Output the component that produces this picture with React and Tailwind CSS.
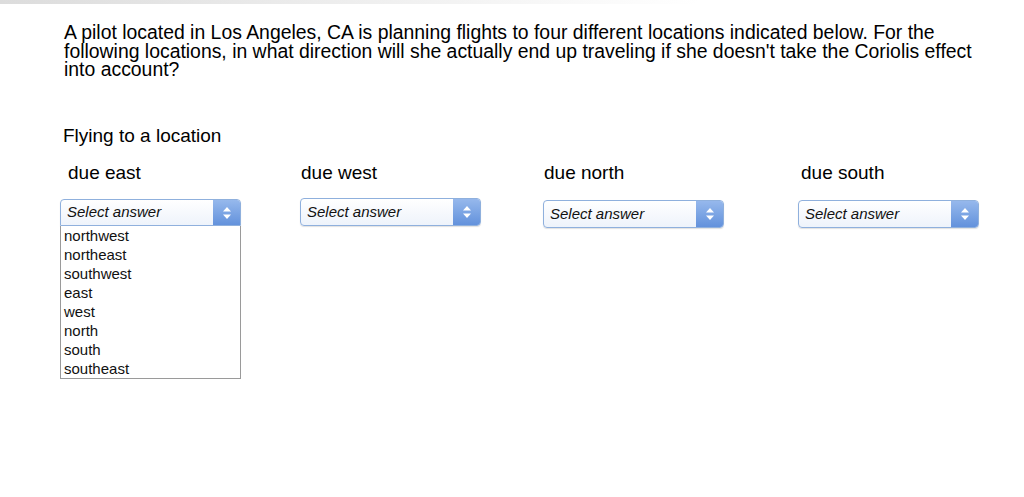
import { useState } from 'react';

const options = ['northwest', 'northeast', 'southwest', 'east', 'west', 'north', 'south', 'southeast'];

const columns = [
  { label: 'due east', w: 'w-[240px]', labelPad: 'pl-[8px]', boxMt: 'mt-[15px]', open: true },
  { label: 'due west', w: 'w-[243px]', labelPad: 'pl-[1px]', boxMt: 'mt-[14px]' },
  { label: 'due north', w: 'w-[255px]', labelPad: 'pl-[1px]', boxMt: 'mt-[16px]' },
  { label: 'due south', w: 'w-[200px]', labelPad: 'pl-[3px]', boxMt: 'mt-[16px]' },
];

function Arrows() {
  return (
    <svg width="10" height="14" viewBox="0 0 10 14">
      <path d="M5 1 L9 5.5 L1 5.5 Z" fill="#fff" />
      <path d="M5 13 L9 8.5 L1 8.5 Z" fill="#fff" />
    </svg>
  );
}

function SelectBox({ open }) {
  return (
    <div className="w-[181px]">
      <div
        className={`flex border border-[#8fb0dd] bg-gradient-to-b from-white to-[#eef3fb] shadow-[0_1px_1px_rgba(0,0,0,0.12)] ${
          open ? 'h-[27px] rounded-t-[4px]' : 'h-[28px] rounded-[4px]'
        }`}
      >
        <div className="flex-1 flex items-center pl-[6px] text-[15px] italic text-[#111]">Select answer</div>
        <div
          className={`w-[27px] flex items-center justify-center bg-gradient-to-b from-[#96b8ec] to-[#6392dc] ${
            open ? 'rounded-tr-[3px]' : 'rounded-r-[3px]'
          }`}
        >
          <Arrows />
        </div>
      </div>
      {open && (
        <div className="border border-t-0 border-[#9a9a9a] bg-white">
          {options.map((o) => (
            <div key={o} className="pl-[3px] text-[15px] leading-[19px] text-[#111]">
              {o}
            </div>
          ))}
        </div>
      )}
    </div>
  );
}

export default function App() {
  const [cols] = useState(columns);
  return (
    <div className="relative w-[1024px] h-[497px] bg-white font-['Liberation_Sans',Arial,sans-serif] text-[#111]">
      <div className="h-[4px] w-[700px] bg-gradient-to-r from-[#dcdcdc] via-[#eeeeee] to-white" />
      <div className="pl-[64px] pr-[20px] pt-[19px]">
        <p className="text-[19.4px] leading-[18.7px] text-black">
          A pilot located in Los Angeles, CA is planning flights to four different locations indicated below. For the
          <br />
          following locations, in what direction will she actually end up traveling if she doesn't take the Coriolis effect
          <br />
          into account?
        </p>
      </div>
      <div className="pl-[60px] pt-[46px]">
        <div className="pl-[3px] text-[19px] leading-[22px] text-black">Flying to a location</div>
        <div className="flex mt-[15px]">
          {cols.map((c) => (
            <div key={c.label} className={c.w}>
              <div className={`${c.labelPad} text-[19px] leading-[22px] text-black`}>{c.label}</div>
              <div className={c.boxMt}>
                <SelectBox open={c.open} />
              </div>
            </div>
          ))}
        </div>
      </div>
    </div>
  );
}
